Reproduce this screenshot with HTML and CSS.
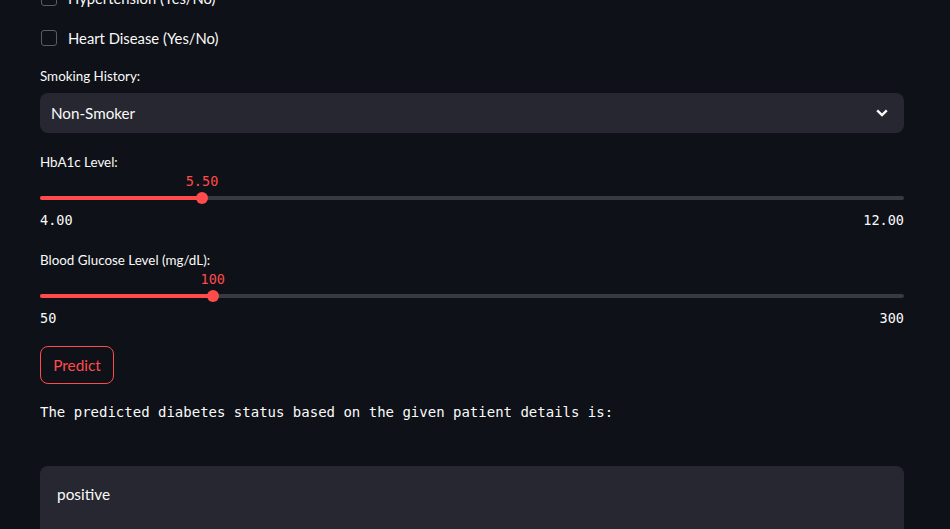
FILE: index.html
```html
<!DOCTYPE html>
<html>
<head>
<meta charset="utf-8">
<link rel="stylesheet" href="styles.css">
</head>
<body>
<main class="main">
  <div class="checks">
    <label class="check"><span class="box"></span><span>Hypertension (Yes/No)</span></label>
    <label class="check"><span class="box"></span><span>Heart Disease (Yes/No)</span></label>
  </div>

  <div class="field">
    <div class="label">Smoking History:</div>
    <div class="select">
      <span>Non-Smoker</span>
      <svg class="chev" width="12" height="8" viewBox="0 0 12 8"><polyline points="1.2,1.3 6,6 10.8,1.3" fill="none" stroke="#fafafa" stroke-width="2.4"/></svg>
    </div>
  </div>

  <div class="field slider-field">
    <div class="label">HbA1c Level:</div>
    <div class="slider">
      <div class="value-row"><span class="value" style="left:18.75%">5.50</span></div>
      <div class="track"><div class="fill" style="width:18.75%"></div><span class="thumb" style="left:18.75%"></span></div>
      <div class="range"><span>4.00</span><span>12.00</span></div>
    </div>
  </div>

  <div class="field slider-field">
    <div class="label">Blood Glucose Level (mg/dL):</div>
    <div class="slider">
      <div class="value-row"><span class="value" style="left:20%">100</span></div>
      <div class="track"><div class="fill" style="width:20%"></div><span class="thumb" style="left:20%"></span></div>
      <div class="range"><span>50</span><span>300</span></div>
    </div>
  </div>

  <button class="btn">Predict</button>

  <p class="mono">The predicted diabetes status based on the given patient details is:</p>

  <div class="result">positive</div>
</main>
</body>
</html>
```

FILE: styles.css
```css
html, body {
  margin: 0;
  padding: 0;
  background: #0e1117;
  color: #fafafa;
  font-family: "Lato", "Noto Sans", sans-serif;
  overflow: hidden;
}
.main {
  width: 864px;
  padding: 0 46px 0 40px;
  display: flex;
  flex-direction: column;
}
.checks {
  margin-top: -14px;
  display: flex;
  flex-direction: column;
  gap: 16px;
}
.check {
  height: 24px;
  display: flex;
  align-items: center;
  gap: 11px;
  font-size: 14.8px;
}
.box {
  width: 14px;
  height: 14px;
  margin-left: 1px;
  border: 1px solid #5b5d66;
  border-radius: 3px;
  background: #0e1117;
}
.field {
  margin-top: 16px;
}
.label {
  font-size: 13.4px;
  line-height: 20px;
  height: 20px;
}
.select {
  margin-top: 7px;
  height: 40px;
  background: #262730;
  border-radius: 8px;
  display: flex;
  align-items: center;
  justify-content: space-between;
  padding: 0 16px 0 11px;
  font-size: 15.2px;
}
.chev {
  display: block;
}
.field + .slider-field {
  margin-top: 19px;
}
.slider-field + .slider-field {
  margin-top: 21px;
}
.value-row {
  position: relative;
  height: 18px;
}
.value, .range, .mono {
  font-family: "DejaVu Sans Mono", "Liberation Mono", monospace;
}
.value {
  position: absolute;
  top: 0;
  transform: translateX(-50%);
  color: #ff4b4b;
  font-size: 13.5px;
  line-height: 18px;
}
.track {
  position: relative;
  margin-top: 6px;
  height: 4px;
  border-radius: 2px;
  background: #383a42;
}
.fill {
  height: 4px;
  border-radius: 2px;
  background: #ff4b4b;
}
.thumb {
  position: absolute;
  top: -4px;
  width: 12px;
  height: 12px;
  margin-left: -6px;
  border-radius: 50%;
  background: #ff4b4b;
}
.range {
  display: flex;
  justify-content: space-between;
  margin-top: 11px;
  font-size: 13.5px;
  line-height: 18px;
}
.btn {
  align-self: flex-start;
  margin-top: 19px;
  height: 38px;
  width: 74px;
  padding: 0;
  background: transparent;
  border: 1px solid #ff4b4b;
  border-radius: 8px;
  color: #ff4b4b;
  font-family: "Lato", "Noto Sans", sans-serif;
  font-size: 15.4px;
}
.mono {
  margin: 18px 0 0;
  font-size: 14px;
  line-height: 20px;
}
.result {
  margin-top: 44px;
  background: #262730;
  border-radius: 8px 8px 0 0;
  padding: 16px 17px 40px;
  font-size: 15.4px;
  line-height: 24px;
}
```
